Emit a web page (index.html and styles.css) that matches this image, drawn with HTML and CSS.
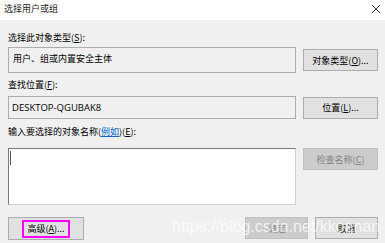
FILE: index.html
```html
<!DOCTYPE html>
<html lang="zh-CN">
<head>
    <meta charset="UTF-8">
    <title>选择用户或组</title>
    <link rel="stylesheet" href="styles.css">
</head>
<body>
    <div class="dialog">
        <div class="titlebar">
            <span class="title">选择用户或组</span>
            <svg class="close" width="10" height="10" viewBox="0 0 10 10">
                <path d="M1 1L9 9M9 1L1 9" stroke="#333" stroke-width="1" fill="none"/>
            </svg>
        </div>
        <div class="content">
            <div class="label label-first">选择此对象类型(<u>S</u>):</div>
            <div class="row">
                <div class="field field-type">用户、组或内置安全主体</div>
                <button class="btn">对象类型(<u>O</u>)...</button>
            </div>

            <div class="label label-loc">查找位置(<u>F</u>):</div>
            <div class="row">
                <div class="field field-loc">DESKTOP-QGUBAK8</div>
                <button class="btn">位置(<u>L</u>)...</button>
            </div>

            <div class="label label-name">输入要选择的对象名称(<a href="#">例如</a>)(<u>E</u>):</div>
            <div class="row row-top">
                <div class="names"><span class="caret"></span></div>
                <button class="btn" disabled>检查名称(<u>C</u>)</button>
            </div>

            <div class="footer">
                <button class="btn btn-wide"><span class="mark">高级(<u>A</u>)...</span></button>
                <div class="actions">
                    <button class="btn btn-ok" disabled>确定</button>
                    <button class="btn btn-ok">取消</button>
                </div>
                <span class="watermark">https://blog.csdn.net/kkoenan</span>
            </div>
        </div>
    </div>
</body>
</html>
```

FILE: styles.css
```css
body {
    margin: 0;
    font-family: "Noto Sans CJK SC", "Liberation Sans", sans-serif;
    font-size: 9px;
    color: #000;
    background: #f0f0f0;
}
.dialog {
    width: 385px;
    height: 243px;
    overflow: hidden;
}
.titlebar {
    height: 20px;
    background: #fff;
    display: flex;
    align-items: center;
    justify-content: space-between;
    padding: 0 4px 2px 4px;
    box-sizing: border-box;
}
.title {
    font-size: 9px;
    line-height: 12px;
    color: #222;
}
.close {
    margin-right: 0;
}
.content {
    padding: 0 7px 0 8px;
}
.label {
    line-height: 12px;
    height: 12px;
}
.label-first {
    margin-top: 12px;
    margin-bottom: 3px;
}
.label-loc {
    margin-top: 6px;
    margin-bottom: 5px;
}
.label-name {
    margin-top: 7px;
    margin-bottom: 10px;
}
.label a {
    color: #0066cc;
}
.row {
    display: flex;
    align-items: center;
    gap: 7px;
}
.row-top {
    align-items: flex-start;
}
.field {
    width: 288px;
    box-sizing: border-box;
    border: 1px solid #adadad;
    background: #f0f0f0;
    padding: 0 4px;
    display: flex;
    align-items: center;
}
.field-type {
    height: 26px;
    padding-bottom: 3px;
}
.field-loc {
    height: 23px;
    padding-left: 3px;
    font-family: "Open Sans", "Liberation Sans", sans-serif;
    font-size: 9.5px;
}
.names {
    width: 288px;
    height: 57px;
    box-sizing: border-box;
    background: #fff;
    border: 1px solid #d0d0d0;
    border-top-color: #7a7a7a;
    border-left-color: #7a7a7a;
    padding: 2px 0 0 1px;
}
.caret {
    display: block;
    width: 1px;
    height: 14px;
    background: #555;
}
.btn {
    width: 75px;
    height: 22px;
    box-sizing: border-box;
    border: 1px solid #adadad;
    background: #e1e1e1;
    font-family: inherit;
    font-size: 9px;
    color: #000;
    padding: 0;
}
.btn:disabled {
    background: #cccccc;
    border-color: #bfbfbf;
    color: #838383;
}
.footer {
    position: relative;
    display: flex;
    justify-content: space-between;
    margin-top: 12px;
}
.btn-wide {
    width: 76px;
    height: 23px;
}
.mark {
    display: inline-block;
    border: 2px solid #ff00ff;
    padding: 1px 3px;
    line-height: 12px;
}
.actions {
    display: flex;
    gap: 7px;
}
.btn-ok {
    width: 63px;
    height: 22px;
}
.watermark {
    position: absolute;
    left: 164px;
    top: 1px;
    font-family: "Liberation Sans", sans-serif;
    font-size: 16px;
    color: rgba(255, 255, 255, 0.75);
    pointer-events: none;
}
```
